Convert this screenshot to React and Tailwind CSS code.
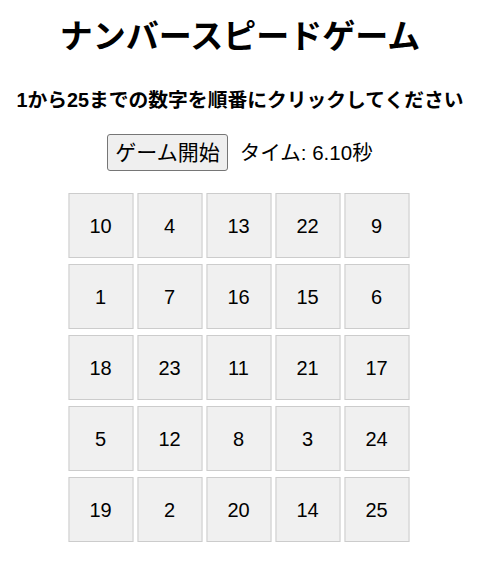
import { useState } from 'react';

const numbers = [
  10, 4, 13, 22, 9,
  1, 7, 16, 15, 6,
  18, 23, 11, 21, 17,
  5, 12, 8, 3, 24,
  19, 2, 20, 14, 25,
];

function App() {
  const [time] = useState('6.10');

  return (
    <div className="min-h-screen bg-white text-black text-center font-['Liberation_Sans','Noto_Sans_CJK_JP',sans-serif]">
      <h1 className="pt-[21px] text-[33px] leading-[32px] font-bold">ナンバースピードゲーム</h1>
      <h2 className="mt-[37px] text-[19.8px] leading-[20px] font-bold">1から25までの数字を順番にクリックしてください</h2>

      {/* start button + timer */}
      <div className="mt-[24px] flex items-center justify-center gap-[12px]">
        <button className="h-[37px] px-[7px] border border-[#767676] rounded-[3px] bg-[#efefef] text-[21px] leading-[24px]">
          ゲーム開始
        </button>
        <span className="text-[20.5px] leading-[24px]">タイム: {time}秒</span>
      </div>

      {/* number board */}
      <div className="mt-[22px] mx-auto w-[341px] grid grid-cols-5 gap-x-[4px] gap-y-[6px] -translate-x-[1.5px]">
        {numbers.map((n) => (
          <button
            key={n}
            className="h-[65px] border border-[#cccccc] bg-[#f0f0f0] text-[20px] flex items-center justify-center"
          >
            {n}
          </button>
        ))}
      </div>
    </div>
  );
}

export default App;
